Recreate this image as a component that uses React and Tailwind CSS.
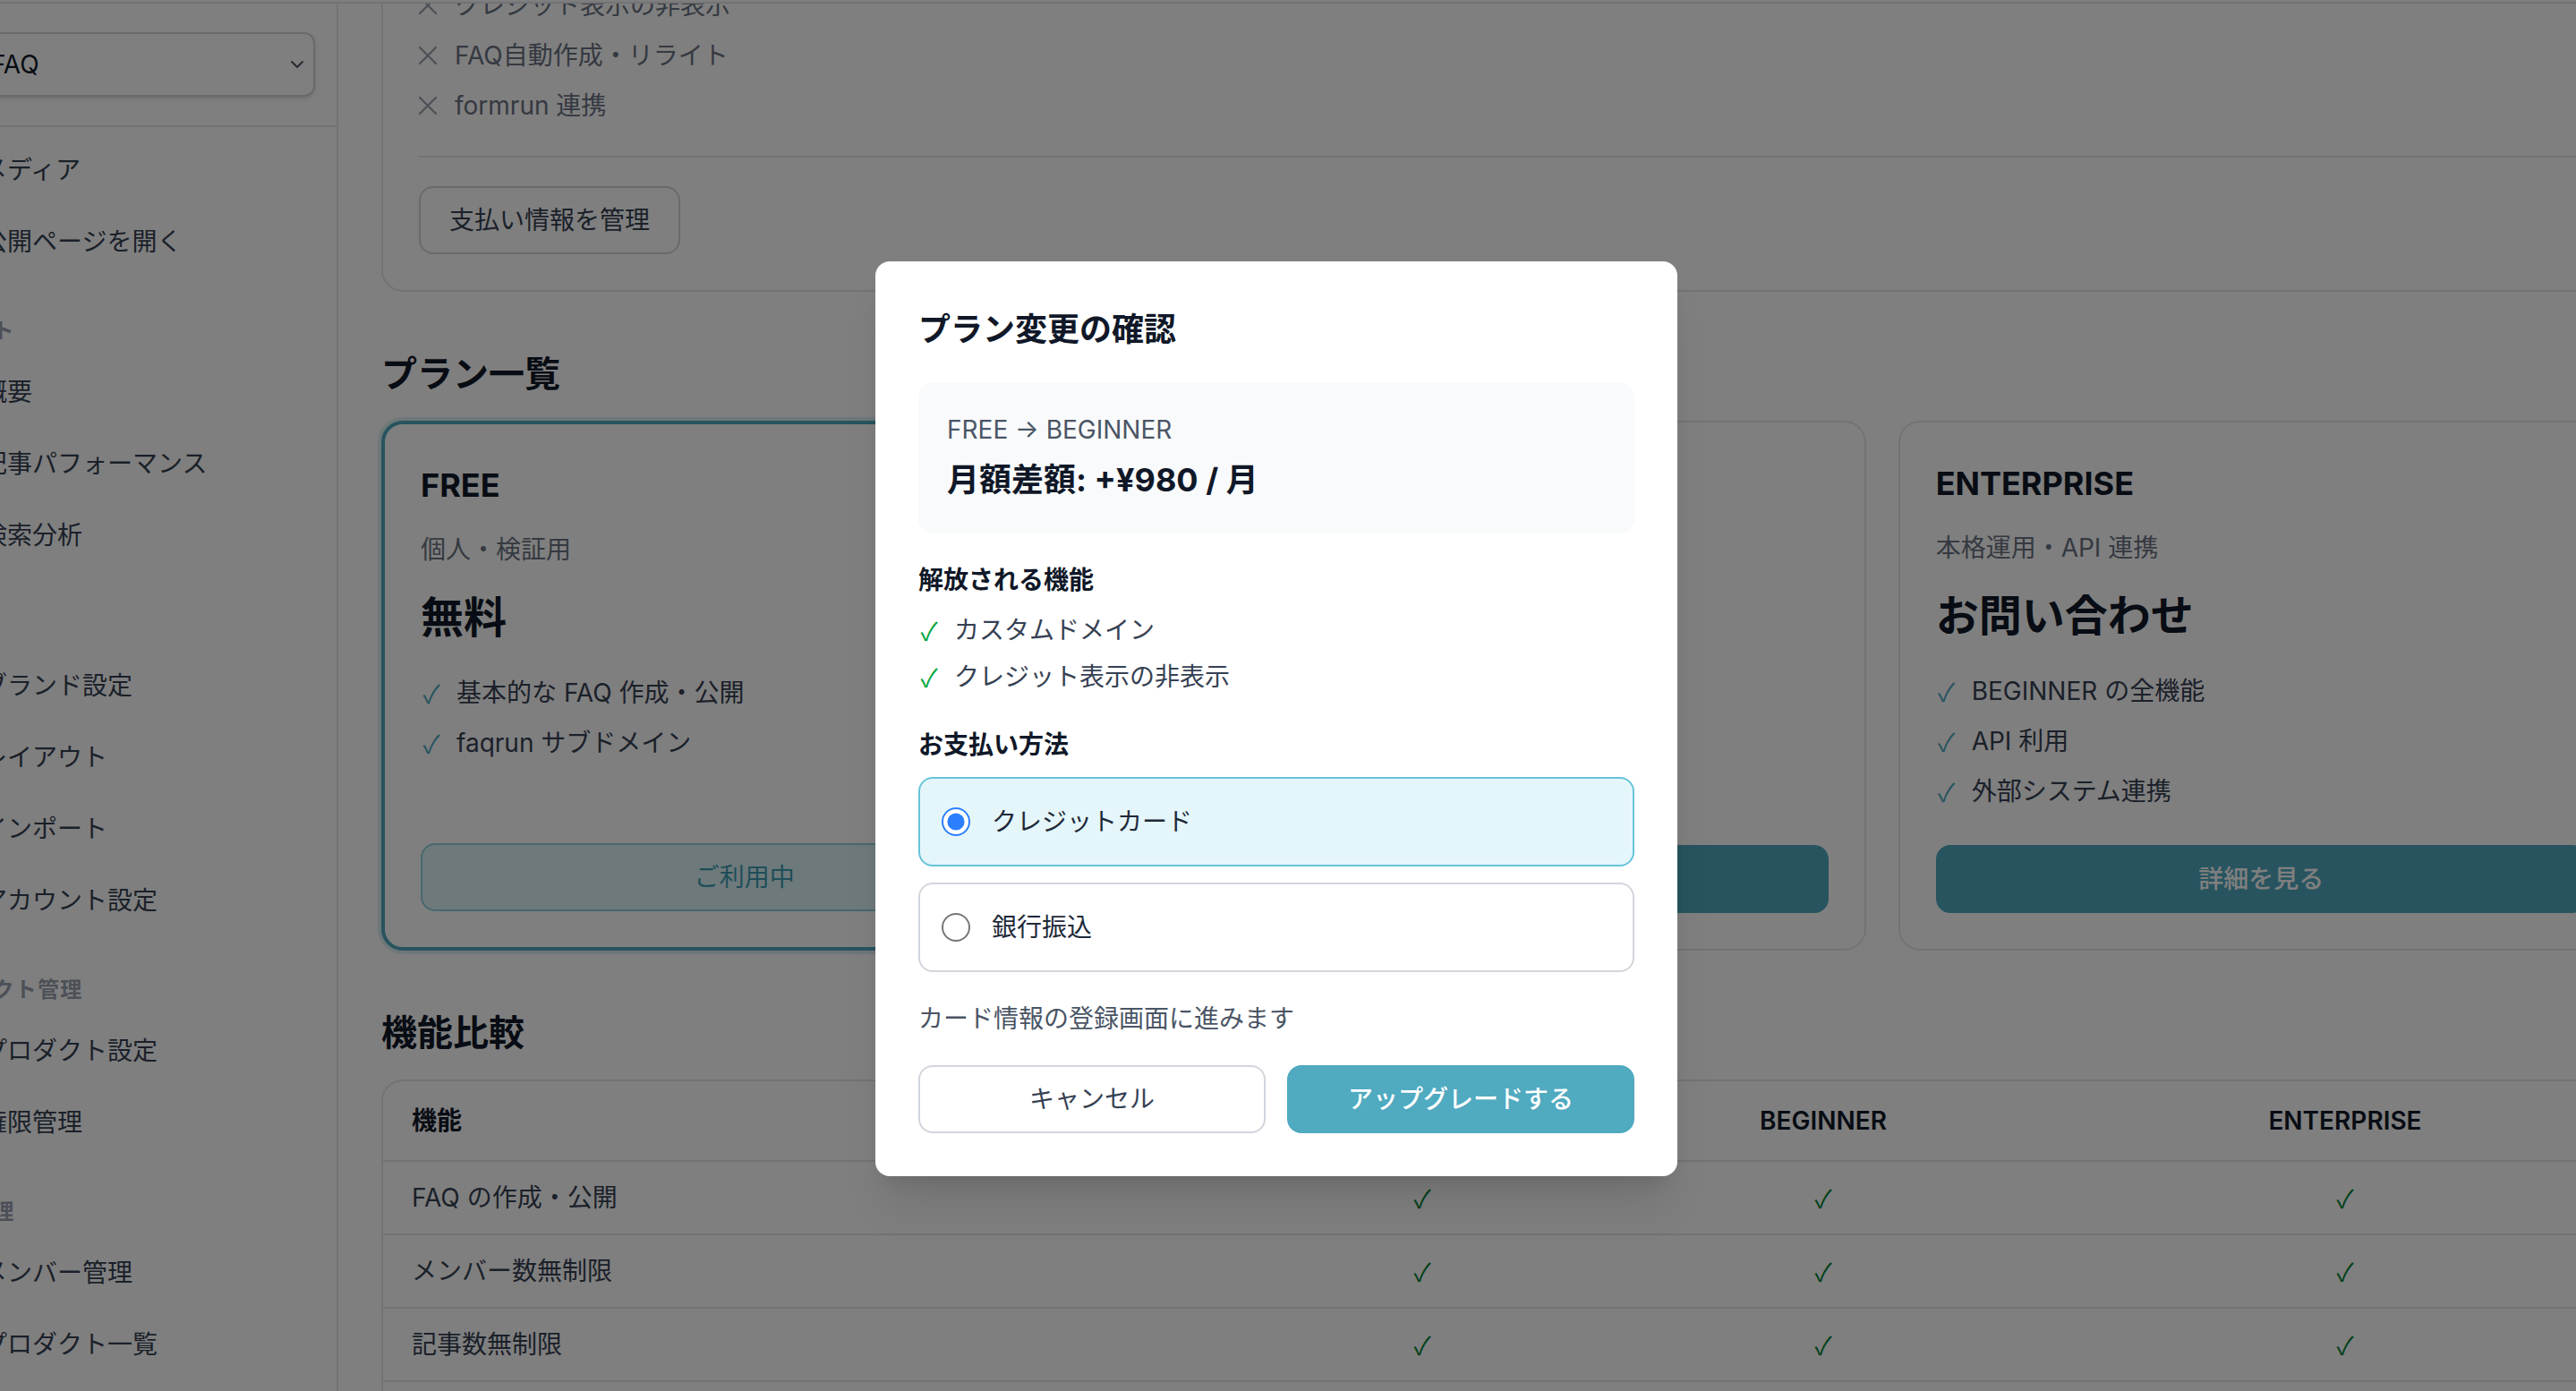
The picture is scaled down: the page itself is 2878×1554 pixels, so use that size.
import React from 'react';
import {
  ChevronDown,
  X,
  Folder,
  ExternalLink,
  Activity,
  FileText,
  Search,
  Palette,
  LayoutGrid,
  Upload,
  User,
  Package,
  Shield,
  Users,
  List,
} from 'lucide-react';

const TEAL = 'text-[#4fa9bf]';
const CHECK_FONT = "[font-family:'Noto_Sans_CJK_JP',sans-serif]";

const navGroups = [
  {
    label: null,
    items: [
      ['メディア', Folder],
      ['公開ページを開く', ExternalLink],
    ],
  },
  {
    label: 'レポート',
    items: [
      ['概要', Activity],
      ['記事パフォーマンス', FileText],
      ['検索分析', Search],
    ],
  },
  {
    label: '設定',
    items: [
      ['ブランド設定', Palette],
      ['レイアウト', LayoutGrid],
      ['インポート', Upload],
      ['アカウント設定', User],
    ],
  },
  {
    label: 'プロダクト管理',
    items: [
      ['プロダクト設定', Package],
      ['権限管理', Shield],
    ],
  },
  {
    label: '組織管理',
    items: [
      ['メンバー管理', Users],
      ['プロダクト一覧', List],
    ],
  },
];

const plans = [
  {
    name: 'FREE',
    sub: '個人・検証用',
    price: '無料',
    features: ['基本的な FAQ 作成・公開', 'faqrun サブドメイン'],
    cta: 'ご利用中',
    current: true,
  },
  {
    name: 'BEGINNER',
    sub: '小規模チーム向け',
    price: '¥980 / 月',
    features: ['FREE の全機能', 'カスタムドメイン', 'クレジット表示の非表示'],
    cta: 'アップグレード',
  },
  {
    name: 'ENTERPRISE',
    sub: '本格運用・API 連携',
    price: 'お問い合わせ',
    features: ['BEGINNER の全機能', 'API 利用', '外部システム連携'],
    cta: '詳細を見る',
  },
];

const compareRows = ['FAQ の作成・公開', 'メンバー数無制限', '記事数無制限', 'カスタムドメイン'];

const Sidebar = () => (
  <aside className="w-[189px] shrink-0 overflow-hidden border-r border-gray-200 bg-white">
    <div className="-ml-[66px] w-[254px]">
      {/* Product select */}
      <div className="border-b border-gray-200 px-3 py-4">
        <div className="flex h-9 items-center justify-between rounded-md border border-gray-300 bg-white pl-4 pr-[3px] shadow-sm">
          <span className="whitespace-nowrap text-sm text-gray-900">デモ FAQ</span>
          <ChevronDown className="h-3 w-3 text-gray-600" strokeWidth={2} />
        </div>
      </div>

      <nav className="px-3 pt-1.5">
        {navGroups.map((group, gi) => (
          <div key={gi} className={gi === 0 ? '' : 'mt-6'}>
            {group.label && (
              <p className="mb-2 whitespace-nowrap px-3 text-xs font-semibold tracking-wider text-gray-400">
                {group.label}
              </p>
            )}
            <div className="space-y-1">
              {group.items.map(([label, Icon]) => (
                <a key={label} className="flex items-center gap-3 rounded-md px-3 py-2 text-sm text-gray-700">
                  <Icon className="h-5 w-5 shrink-0 text-gray-400" />
                  <span className="whitespace-nowrap">{label}</span>
                </a>
              ))}
            </div>
          </div>
        ))}
      </nav>
    </div>
  </aside>
);

const PlanCard = ({ plan }) => (
  <div
    className={`flex flex-col rounded-xl bg-white p-5 ${
      plan.current ? 'border-2 border-[#4fa9bf] ring-2 ring-[#4fa9bf]/20' : 'border border-gray-200'
    }`}
  >
    <h3 className="text-lg font-bold leading-7 text-gray-900">{plan.name}</h3>
    <p className="mt-3 text-sm text-gray-500">{plan.sub}</p>
    <p className="mt-3 text-2xl font-bold leading-8 text-gray-900">{plan.price}</p>
    <ul className="mt-4 space-y-2">
      {plan.features.map((f) => (
        <li key={f} className="flex items-center gap-2 text-sm text-gray-700">
          <span className={`w-3 text-center ${CHECK_FONT} ${TEAL}`}>✓</span>
          <span>{f}</span>
        </li>
      ))}
    </ul>
    <div className="mt-auto pt-5">
      {plan.current ? (
        <button className="w-full rounded-lg border border-[#8fd0de] bg-[#ddf2f6] py-2 text-sm text-[#3f9db3]">
          {plan.cta}
        </button>
      ) : (
        <button className="w-full rounded-lg border border-[#4fa9bf] bg-[#4fa9bf] py-2 text-sm font-medium text-white">
          {plan.cta}
        </button>
      )}
    </div>
  </div>
);

const Main = () => (
  <main className="min-w-0 flex-1 overflow-hidden">
    <div className="-mt-[58px] ml-6 w-[1253px]">
      {/* Current plan card (scrolled) */}
      <section className="rounded-xl border border-gray-200 bg-white p-5">
        <ul className="space-y-2">
          {['カスタムドメイン', 'クレジット表示の非表示', 'FAQ自動作成・リライト', 'formrun 連携'].map((t) => (
            <li key={t} className="flex items-center gap-1.5 text-sm text-gray-500">
              <X className="-ml-1 h-[18px] w-[18px] text-gray-400" strokeWidth={1.5} />
              <span>{t}</span>
            </li>
          ))}
        </ul>
        <div className="mt-[18px] border-t border-gray-200 pt-4">
          <button className="rounded-lg border border-gray-300 bg-white px-4 py-2 text-sm text-gray-700">
            支払い情報を管理
          </button>
        </div>
      </section>

      {/* Plans */}
      <h2 className="mb-3 mt-8 text-xl font-bold leading-7 text-gray-900">プラン一覧</h2>
      <div className="grid grid-cols-3 gap-[18px]">
        {plans.map((p) => (
          <PlanCard key={p.name} plan={p} />
        ))}
      </div>

      {/* Comparison */}
      <h2 className="mb-3 mt-8 text-xl font-bold leading-7 text-gray-900">機能比較</h2>
      <div className="overflow-hidden rounded-xl border border-gray-200 bg-white">
        <div className="grid grid-cols-[493px_175px_273px_1fr] border-b border-gray-200 text-sm font-semibold text-gray-900">
          <div className="px-4 py-3">機能</div>
          <div className="py-3 text-center">FREE</div>
          <div className="py-3 text-center">BEGINNER</div>
          <div className="py-3 text-center">ENTERPRISE</div>
        </div>
        {compareRows.map((row) => (
          <div
            key={row}
            className="grid grid-cols-[493px_175px_273px_1fr] border-b border-gray-200 text-sm text-gray-700"
          >
            <div className="px-4 py-2.5">{row}</div>
            <div className={`py-2.5 text-center text-green-700 ${CHECK_FONT}`}>✓</div>
            <div className={`py-2.5 text-center text-green-700 ${CHECK_FONT}`}>✓</div>
            <div className={`py-2.5 text-center text-green-700 ${CHECK_FONT}`}>✓</div>
          </div>
        ))}
      </div>
    </div>
  </main>
);

const ConfirmModal = () => (
  <div className="absolute inset-0 flex items-center justify-center bg-black/50 pr-[13px] pt-[26px]">
    <div className="w-[448px] rounded-lg bg-white p-6 shadow-xl">
      <h2 className="text-lg font-bold leading-7 text-gray-900">プラン変更の確認</h2>

      <div className="mt-4 rounded-lg bg-gray-50 p-4">
        <p className="text-sm text-gray-600">FREE → BEGINNER</p>
        <p className="mt-1 text-lg font-bold leading-7 text-gray-900">月額差額: +¥980 / 月</p>
      </div>

      <p className="mt-4 text-sm font-bold text-gray-900">解放される機能</p>
      <ul className="mt-2 space-y-1.5">
        {['カスタムドメイン', 'クレジット表示の非表示'].map((f) => (
          <li key={f} className="flex items-center gap-2 text-sm text-gray-700">
            <span className={`w-3 text-center text-green-600 ${CHECK_FONT}`}>✓</span>
            <span>{f}</span>
          </li>
        ))}
      </ul>

      <p className="mt-[18px] text-sm font-bold text-gray-900">お支払い方法</p>
      <div className="mt-2 space-y-[9px]">
        <label className="flex items-center gap-3 rounded-lg border border-[#67c4d9] bg-[#e4f6fa] px-3 py-3.5">
          <input type="radio" name="payment" defaultChecked className="h-4 w-4 accent-blue-500" />
          <span className="text-sm text-gray-800">クレジットカード</span>
        </label>
        <label className="flex items-center gap-3 rounded-lg border border-gray-300 bg-white px-3 py-3.5">
          <input type="radio" name="payment" className="h-4 w-4 accent-blue-500" />
          <span className="text-sm text-gray-800">銀行振込</span>
        </label>
      </div>

      <p className="mt-4 text-sm text-gray-600">カード情報の登録画面に進みます</p>

      <div className="mt-4 flex gap-3">
        <button className="flex-1 rounded-lg border border-gray-300 bg-white py-2 text-sm text-gray-700">
          キャンセル
        </button>
        <button className="flex-1 rounded-lg border border-[#50aac0] bg-[#50aac0] py-2 text-sm font-medium text-white">
          アップグレードする
        </button>
      </div>
    </div>
  </div>
);

export default function App() {
  return (
    <div className="h-screen w-screen overflow-hidden bg-white">
      <div className="relative flex h-[777px] w-[1439px] flex-col overflow-hidden bg-white text-gray-900 [font-family:Inter,'Noto_Sans_CJK_JP',sans-serif] [zoom:2]">
        <div className="h-[2px] shrink-0 border-b border-gray-200" />
        <div className="flex min-h-0 flex-1">
          <Sidebar />
          <Main />
        </div>
        <ConfirmModal />
      </div>
    </div>
  );
}
